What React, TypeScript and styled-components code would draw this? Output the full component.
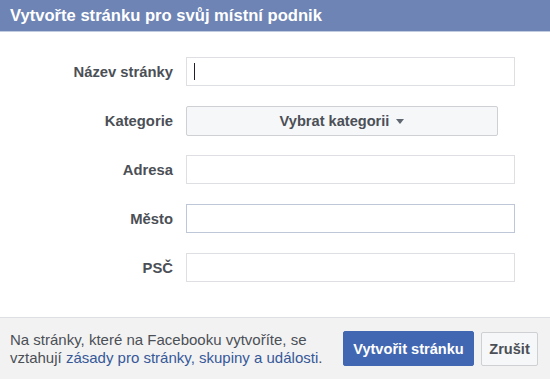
import React from 'react';
import styled, { createGlobalStyle } from 'styled-components';

const GlobalStyle = createGlobalStyle`
  html, body {
    margin: 0;
    padding: 0;
    background: #ffffff;
    font-family: "Liberation Sans", Arial, sans-serif;
  }
`;

const fields = [
  { label: 'Název stránky', kind: 'text', focused: false, caret: true },
  { label: 'Kategorie', kind: 'select' },
  { label: 'Adresa', kind: 'text' },
  { label: 'Město', kind: 'text', focused: true },
  { label: 'PSČ', kind: 'text' },
];

const App = () => {
  return (
    <>
      <GlobalStyle />
      <Dialog>
        <Header>Vytvořte stránku pro svůj místní podnik</Header>

        <Body>
          {fields.map((f) => (
            <Row key={f.label}>
              <Label>{f.label}</Label>
              {f.kind === 'select' ? (
                <SelectButton type="button">
                  Vybrat kategorii
                  <Caret />
                </SelectButton>
              ) : (
                <TextInput $focused={!!f.focused}>
                  {f.caret && <Cursor />}
                </TextInput>
              )}
            </Row>
          ))}
        </Body>

        <Footer>
          <Note>
            Na stránky, které na Facebooku vytvoříte, se
            <br />
            vztahují <NoteLink>zásady pro stránky, skupiny a události</NoteLink>.
          </Note>
          <Actions>
            <PrimaryButton type="button">Vytvořit stránku</PrimaryButton>
            <CancelButton type="button">Zrušit</CancelButton>
          </Actions>
        </Footer>
      </Dialog>
    </>
  );
};

export default App;

const Dialog = styled.div`
  width: 550px;
  height: 379px;
  display: flex;
  flex-direction: column;
  background: #ffffff;
  overflow: hidden;
`;

const Header = styled.div`
  height: 31px;
  border-bottom: 1px solid #c2cce0;
  background: #6d84b4;
  color: #ffffff;
  font-weight: bold;
  font-size: 16.6px;
  line-height: 31px;
  padding-left: 10px;
`;

const Body = styled.div`
  flex: 1;
  display: flex;
  flex-direction: column;
  gap: 20px;
  padding-top: 25px;
`;

const Row = styled.div`
  display: flex;
  align-items: center;
  height: 29px;
`;

const Label = styled.div`
  width: 173px;
  margin-right: 13px;
  text-align: right;
  color: #4b4f56;
  font-weight: bold;
  font-size: 14.8px;
`;

const TextInput = styled.div<{ $focused: boolean }>`
  box-sizing: border-box;
  width: 329px;
  height: 29px;
  border: 1px solid ${(p) => (p.$focused ? '#bdc7d8' : '#dddfe2')};
  background: #ffffff;
  display: flex;
  align-items: center;
  padding-left: 7px;
`;

const Cursor = styled.span`
  width: 1px;
  height: 17px;
  background: #1d2129;
`;

const SelectButton = styled.button`
  box-sizing: border-box;
  width: 312px;
  height: 30px;
  border: 1px solid #ced0d4;
  border-radius: 2px;
  background: #f6f7f9;
  color: #4b4f56;
  font-family: inherit;
  font-weight: bold;
  font-size: 14.6px;
  display: flex;
  align-items: center;
  justify-content: center;
  gap: 7px;
  padding: 0;
`;

const Caret = styled.span`
  width: 0;
  height: 0;
  border-left: 4px solid transparent;
  border-right: 4px solid transparent;
  border-top: 5px solid #606770;
  margin-top: 1px;
`;

const Footer = styled.div`
  height: 61px;
  border-top: 1px solid #dddfe2;
  background: #f2f2f2;
  display: flex;
  align-items: center;
  justify-content: space-between;
  padding: 0 12px 0 10px;
`;

const Note = styled.div`
  color: #4b4f56;
  font-size: 15px;
  line-height: 18px;
  margin-top: 1px;
  white-space: nowrap;
`;

const NoteLink = styled.a`
  color: #365899;
  text-decoration: none;
  cursor: pointer;
`;

const Actions = styled.div`
  display: flex;
  align-items: center;
  gap: 7px;
`;

const ButtonBase = styled.button`
  box-sizing: border-box;
  height: 35px;
  border-radius: 2px;
  font-family: inherit;
  font-weight: bold;
  font-size: 14.6px;
  padding: 0;
  white-space: nowrap;
  cursor: pointer;
`;

const PrimaryButton = styled(ButtonBase)`
  width: 131px;
  background: #4267b2;
  border: 1px solid #4267b2;
  color: #ffffff;
`;

const CancelButton = styled(ButtonBase)`
  width: 57px;
  height: 34px;
  background: #f6f7f9;
  border: 1px solid #ced0d4;
  color: #4b4f56;
`;
